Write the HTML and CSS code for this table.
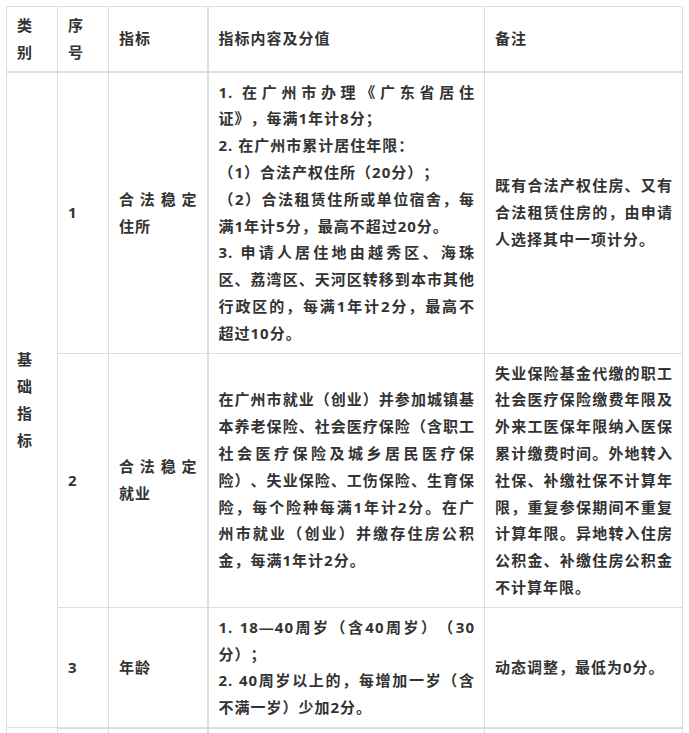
FILE: index.html
```html
<!DOCTYPE html>
<html lang="zh-CN">
<head>
<meta charset="utf-8">
<title>积分指标</title>
<link rel="stylesheet" href="styles.css">
</head>
<body>
<div class="page">
  <table class="score">
    <colgroup>
      <col class="c-type">
      <col class="c-no">
      <col class="c-item">
      <col class="c-content">
      <col class="c-note">
    </colgroup>
    <thead>
      <tr>
        <th>类别</th>
        <th>序号</th>
        <th>指标</th>
        <th class="wide">指标内容及分值</th>
        <th>备注</th>
      </tr>
    </thead>
    <tbody>
      <tr>
        <td class="type" rowspan="3">基础指标</td>
        <td>1</td>
        <td>合法稳定住所</td>
        <td class="wide">1. 在广州市办理《广东省居住证》，每满1年计8分；<br>2. 在广州市累计居住年限：<br>（1）合法产权住所（20分）；<br>（2）合法租赁住所或单位宿舍，每满1年计5分，最高不超过20分。<br>3. 申请人居住地由越秀区、海珠区、荔湾区、天河区转移到本市其他行政区的，每满1年计2分，最高不超过10分。</td>
        <td>既有合法产权住房、又有合法租赁住房的，由申请人选择其中一项计分。</td>
      </tr>
      <tr>
        <td>2</td>
        <td>合法稳定就业</td>
        <td class="wide">在广州市就业（创业）并参加城镇基本养老保险、社会医疗保险（含职工社会医疗保险及城乡居民医疗保险）、失业保险、工伤保险、生育保险，每个险种每满1年计2分。在广州市就业（创业）并缴存住房公积金，每满1年计2分。</td>
        <td>失业保险基金代缴的职工社会医疗保险缴费年限及外来工医保年限纳入医保累计缴费时间。外地转入社保、补缴社保不计算年限，重复参保期间不重复计算年限。异地转入住房公积金、补缴住房公积金不计算年限。</td>
      </tr>
      <tr class="last">
        <td>3</td>
        <td>年龄</td>
        <td class="wide">1. 18—40周岁（含40周岁）（30分）；<br>2. 40周岁以上的，每增加一岁（含不满一岁）少加2分。</td>
        <td>动态调整，最低为0分。</td>
      </tr>
      <tr class="more">
        <td></td>
        <td></td>
        <td></td>
        <td class="wide"></td>
        <td></td>
      </tr>
    </tbody>
  </table>
</div>
</body>
</html>
```

FILE: styles.css
```css
html, body {
  margin: 0;
  padding: 0;
  background: #ffffff;
}

.page {
  padding: 6px;
}

.score {
  width: 676px;
  table-layout: fixed;
  border-collapse: collapse;
  font-family: "Open Sans", "Noto Sans CJK SC", sans-serif;
  font-size: 15px;
  letter-spacing: 1px;
  line-height: 26.8px;
  font-weight: bold;
  color: #333333;
  text-spacing-trim: space-all;
}

.c-type { width: 51px; }
.c-no { width: 51px; }
.c-item { width: 99px; }
.c-content { width: 277px; }
.c-note { width: 198px; }

.score th,
.score td {
  border: 1px solid #dddddd;
  padding: 6px 9px 6px 10px;
  text-align: justify;
  vertical-align: middle;
  font-weight: bold;
  word-break: break-all;
}

.score th {
  padding-top: 5px;
  padding-bottom: 5px;
}

.score thead th {
  border-bottom-width: 2px;
}

.score .wide {
  border-left-width: 2px;
}

.score tr.last td {
  border-bottom-width: 2px;
}

.score tr.more td {
  height: 40px;
}
```
